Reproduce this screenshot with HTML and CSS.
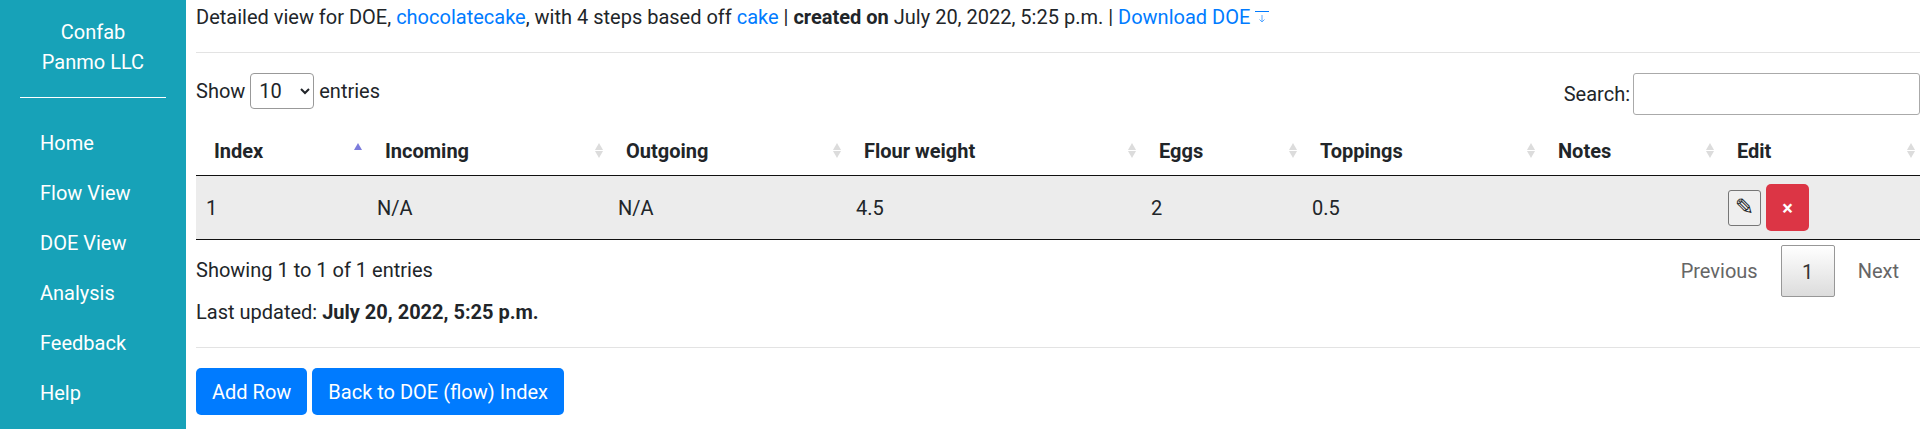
FILE: index.html
```html
<!DOCTYPE html>
<html lang="en">

<head>
    <meta charset="UTF-8">
    <title>DOE Detail</title>
    <link rel="stylesheet" href="styles.css">
</head>

<body>
    <aside class="sidebar">
        <div class="brand">Confab<br>Panmo LLC</div>
        <hr class="brand-rule">
        <nav class="side-nav">
            <a href="#">Home</a>
            <a href="#">Flow View</a>
            <a href="#">DOE View</a>
            <a href="#">Analysis</a>
            <a href="#">Feedback</a>
            <a href="#">Help</a>
        </nav>
    </aside>

    <main class="content">
        <p class="summary">Detailed view for DOE, <a href="#">chocolatecake</a>, with 4 steps based off <a href="#">cake</a> | <b>created on</b> July 20, 2022, 5:25 p.m. | <a href="#">Download DOE <svg class="dl-icon" width="14" height="12" viewBox="0 0 14 12"><path d="M0 .5h14" stroke="#007bff" fill="none"/><path d="M7 4v7M4.5 8.5 7 11l2.5-2.5" stroke="#5aa8ff" fill="none"/></svg></a></p>
        <hr class="rule rule-top">

        <div class="table-controls">
            <label class="length">Show
                <select>
                    <option>10</option>
                    <option>25</option>
                </select>
                entries</label>
            <label class="search">Search:<input type="search"></label>
        </div>

        <table class="data">
            <colgroup>
                <col class="c-index">
                <col class="c-in">
                <col class="c-out">
                <col class="c-flour">
                <col class="c-eggs">
                <col class="c-top">
                <col class="c-notes">
                <col class="c-edit">
            </colgroup>
            <thead>
                <tr>
                    <th class="sort-asc">Index</th>
                    <th>Incoming</th>
                    <th>Outgoing</th>
                    <th>Flour weight</th>
                    <th>Eggs</th>
                    <th>Toppings</th>
                    <th>Notes</th>
                    <th>Edit</th>
                </tr>
            </thead>
            <tbody>
                <tr>
                    <td>1</td>
                    <td>N/A</td>
                    <td>N/A</td>
                    <td>4.5</td>
                    <td>2</td>
                    <td>0.5</td>
                    <td></td>
                    <td class="actions">
                        <button class="btn-edit">✎</button>
                        <button class="btn-del">×</button>
                    </td>
                </tr>
            </tbody>
        </table>

        <div class="table-footer">
            <div class="info">Showing 1 to 1 of 1 entries</div>
            <div class="pager">
                <a href="#">Previous</a>
                <a href="#" class="current">1</a>
                <a href="#">Next</a>
            </div>
        </div>

        <p class="updated">Last updated: <b>July 20, 2022, 5:25 p.m.</b></p>
        <hr class="rule rule-bottom">

        <div class="page-actions">
            <button class="btn-primary">Add Row</button>
            <button class="btn-primary">Back to DOE (flow) Index</button>
        </div>
    </main>
</body>

</html>
```

FILE: styles.css
```css
*,
*::before,
*::after {
    box-sizing: border-box;
}

body {
    margin: 0;
    display: flex;
    height: 429px;
    overflow: hidden;
    font-family: Roboto, sans-serif;
    font-size: 20px;
    line-height: 30px;
    color: #212529;
    background-color: white;
}

a {
    color: #007bff;
    text-decoration: none;
}

.sidebar {
    width: 186px;
    flex-shrink: 0;
    padding: 17px 20px 0;
    background-color: #17a2b8;
    color: white;
}

.brand {
    text-align: center;
    line-height: 30px;
}

.brand-rule {
    margin: 20px 0 0;
    border: 0;
    border-top: 1px solid white;
}

.side-nav {
    display: flex;
    flex-direction: column;
    margin-top: 20px;
}

.side-nav a {
    padding-left: 20px;
    height: 50px;
    line-height: 50px;
    color: white;
}

.content {
    flex: 1;
    min-width: 0;
    padding-left: 10px;
}

.summary {
    margin: 0;
    padding-top: 2px;
}

.dl-icon {
    vertical-align: 1px;
}

.rule {
    margin: 0;
    border: 0;
    border-top: 1px solid #e3e3e3;
}

.rule-top {
    margin-top: 20px;
}

.table-controls {
    display: flex;
    justify-content: space-between;
    align-items: flex-start;
    margin-top: 20px;
}

.length select {
    width: 64px;
    height: 36px;
    margin: 0;
    padding: 0 4px;
    font-family: Roboto, sans-serif;
    font-size: 20px;
    color: #212529;
    background-color: white;
    border: 1px solid #999;
    border-radius: 4px;
}

.search {
    display: flex;
    align-items: center;
    gap: 3px;
}

.search input {
    width: 287px;
    height: 42px;
    border: 1px solid #aaa;
    border-radius: 3px;
    background-color: white;
}

.data {
    width: 100%;
    margin-top: 11px;
    table-layout: fixed;
    border-collapse: separate;
    border-spacing: 0;
}

.c-index { width: 171px; }
.c-in { width: 241px; }
.c-out { width: 238px; }
.c-flour { width: 295px; }
.c-eggs { width: 161px; }
.c-top { width: 238px; }
.c-notes { width: 179px; }
.c-edit { width: 201px; }

.data th {
    position: relative;
    height: 50px;
    padding: 0 18px;
    text-align: left;
    font-weight: bold;
    border-bottom: 1px solid #111;
}

/* sort arrows */
.data th::before,
.data th::after {
    content: "";
    position: absolute;
    right: 5.5px;
    width: 0;
    height: 0;
    border-left: 4.5px solid transparent;
    border-right: 4.5px solid transparent;
}

.data th::before {
    top: 17px;
    border-bottom: 7px solid #dcdcdc;
}

.data th::after {
    top: 25px;
    border-top: 7px solid #dcdcdc;
}

.data th.sort-asc::before {
    border-bottom-color: #7c7cdc;
}

.data th.sort-asc::after {
    display: none;
}

.data td {
    height: 64px;
    padding: 0 10px;
    background-color: #ececec;
    border-bottom: 1px solid #111;
}

.data td.actions {
    padding-left: 9px;
    font-size: 0;
}

.btn-edit {
    width: 33px;
    height: 36px;
    padding: 0;
    vertical-align: middle;
    font-family: "DejaVu Sans", sans-serif;
    font-size: 23px;
    line-height: 1;
    color: #212529;
    background-color: #efefef;
    border: 1px solid #767676;
    border-radius: 3px;
}

.btn-del {
    width: 43px;
    height: 47px;
    margin-left: 5px;
    padding: 0;
    vertical-align: middle;
    font-family: Roboto, sans-serif;
    font-size: 20px;
    font-weight: bold;
    color: white;
    background-color: #dc3545;
    border: 0;
    border-radius: 5px;
}

.table-footer {
    display: flex;
    justify-content: space-between;
    align-items: flex-start;
    padding-top: 5px;
}

.info {
    padding-top: 10px;
}

.pager {
    display: flex;
    align-items: center;
    margin-right: 5px;
}

.pager a {
    padding: 0 16px;
    height: 52px;
    line-height: 52px;
    color: #666;
}

.pager .current {
    width: 54px;
    margin: 0 7px;
    text-align: center;
    color: #333;
    border: 1px solid #979797;
    border-radius: 2px;
    background: linear-gradient(to bottom, white, #dcdcdc);
}

.updated {
    margin: 0;
}

.rule-bottom {
    margin-top: 20px;
}

.page-actions {
    display: flex;
    gap: 5px;
    margin-top: 20px;
}

.btn-primary {
    height: 47px;
    padding: 0 16px;
    font-family: Roboto, sans-serif;
    font-size: 20px;
    color: white;
    background-color: #007bff;
    border: 0;
    border-radius: 5px;
}
```
